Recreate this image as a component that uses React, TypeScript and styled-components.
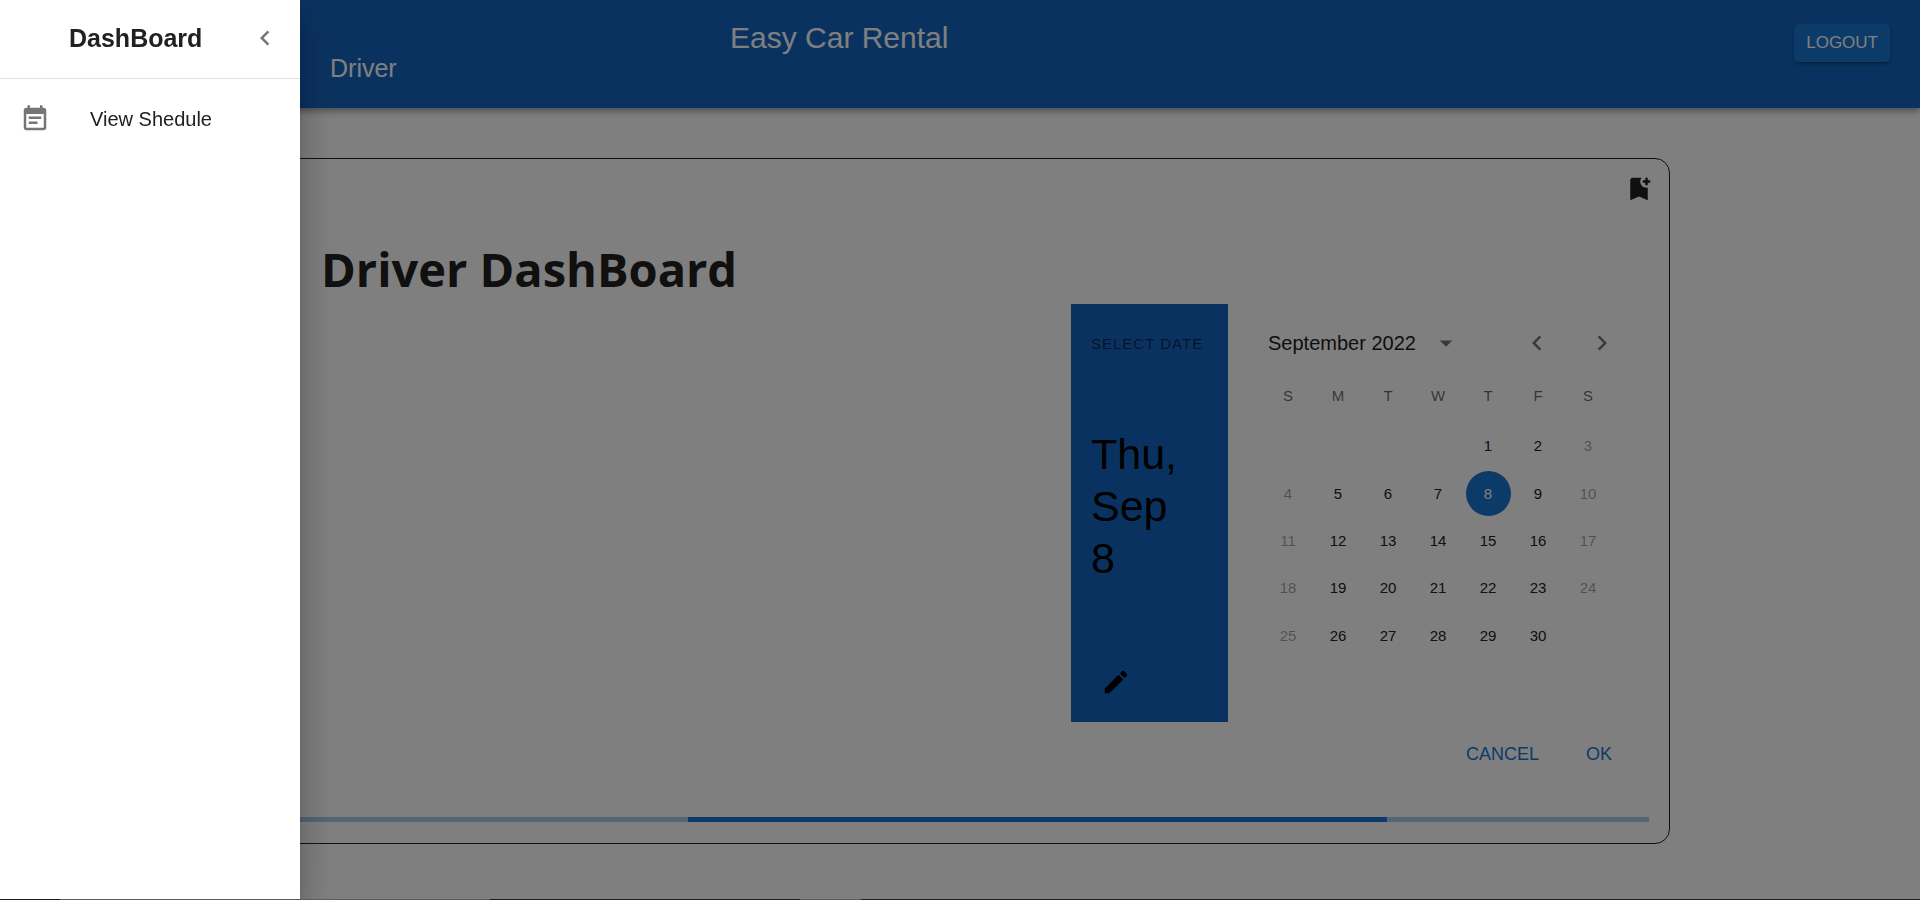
import React, { useState } from "react";
import styled, { createGlobalStyle } from "styled-components";

const GlobalStyle = createGlobalStyle`
  *, *::before, *::after { box-sizing: border-box; }
  body {
    margin: 0;
    background: #fff;
    color: #212121;
    font-family: "Liberation Sans", Arial, sans-serif;
  }
  button { font-family: inherit; cursor: pointer; }
  h1, h2, p { margin: 0; }
`;

const AppBar = styled.header`
  display: flex;
  align-items: flex-start;
  min-height: 108px;
  padding: 20px 30px 24px 330px;
  background: #1565c0;
  color: #fff;
  box-shadow: 0 3px 5px -1px rgba(0, 0, 0, 0.2), 0 5px 6px rgba(0, 0, 0, 0.14),
    0 1px 13px rgba(0, 0, 0, 0.12);
`;

const Role = styled.p`
  flex: 0 0 400px;
  align-self: flex-end;
  font-size: 25px;
  line-height: 32px;
`;

const AppTitle = styled.p`
  flex: 1;
  font-size: 30px;
  line-height: 36px;
`;

const LogoutButton = styled.button`
  height: 38px;
  margin-top: 4px;
  padding: 0 12px;
  border: 0;
  border-radius: 5px;
  background: #1976d2;
  color: #fff;
  font-size: 17px;
  line-height: 28px;
  box-shadow: 0 4px 1px -3px rgba(0, 0, 0, 0.2), 0 3px 3px rgba(0, 0, 0, 0.14),
    0 1px 6px rgba(0, 0, 0, 0.12);
`;

const Main = styled.main`
  padding: 50px 250px 40px;
`;

const Card = styled.section`
  display: flex;
  flex-direction: column;
  padding: 10px 20px 21px;
  border: 1px solid #212121;
  border-radius: 15px;
`;

const CardTools = styled.div`
  display: flex;
  justify-content: flex-end;
  margin-right: -10px;
`;

const IconButton = styled.button<{ $color?: string }>`
  display: flex;
  padding: 5px;
  border: 0;
  border-radius: 50%;
  background: none;
  color: ${(p) => p.$color ?? "#757575"};
`;

const Glyph = styled.svg`
  display: block;
  flex: none;
  width: 30px;
  height: 30px;
  fill: currentColor;
`;

const Heading = styled.h1`
  padding: 25px 50px 0;
  font-family: "Segoe UI", "Open Sans", sans-serif;
  font-size: 47px;
  font-weight: 700;
  line-height: 70px;
`;

const Picker = styled.div`
  display: grid;
  grid-template-columns: 157px 421px;
  justify-content: end;
`;

const PickerToolbar = styled.div`
  display: flex;
  flex-direction: column;
  align-items: flex-start;
  justify-content: space-between;
  height: 418px;
  padding: 20px;
  background: #1565c0;
  color: #000;
`;

const Overline = styled.p`
  color: rgba(0, 0, 0, 0.6);
  font-size: 15px;
  line-height: 40px;
  letter-spacing: 1px;
  text-transform: uppercase;
  white-space: nowrap;
`;

const PickedDate = styled.p`
  width: 90px;
  margin-bottom: 14px;
  font-size: 43px;
  line-height: 52px;
`;

const EditButton = styled(IconButton)`
  margin: 0 0 0 5px;
`;

const Calendar = styled.div`
  width: 400px;
  margin-left: 10px;
`;

const CalendarHeader = styled.div`
  display: flex;
  align-items: center;
  height: 40px;
  margin: 19px 0 6px;
  padding: 0 16px 0 30px;
  font-size: 20px;
  line-height: 30px;
`;

const SwitchView = styled(IconButton)`
  margin-right: auto;
  margin-left: 10px;
`;

const MonthArrows = styled.div`
  display: flex;
  gap: 25px;
`;

const Days = styled.table`
  width: 350px;
  height: 290px;
  margin: 0 auto;
  border-collapse: collapse;
  table-layout: fixed;
  font-size: 15px;
`;

const Weekday = styled.th`
  height: 53px;
  padding: 0;
  color: rgba(0, 0, 0, 0.6);
  font-weight: 400;
`;

const DayCell = styled.td`
  padding: 1px 0;
`;

const Day = styled.button<{ $selected: boolean }>`
  display: block;
  width: 45px;
  height: 45px;
  margin: 0 auto;
  padding: 0;
  border: 0;
  border-radius: 50%;
  background: ${(p) => (p.$selected ? "#1976d2" : "transparent")};
  color: ${(p) => (p.$selected ? "#fff" : "#212121")};
  font-size: 15px;
  &:disabled { color: rgba(0, 0, 0, 0.38); cursor: default; }
`;

const Actions = styled.div`
  display: flex;
  justify-content: flex-end;
  gap: 10px;
  padding: 10px;
`;

const TextButton = styled.button`
  min-width: 80px;
  height: 44px;
  padding: 0 10px;
  border: 0;
  background: none;
  color: #1976d2;
  font-size: 18px;
`;

const Track = styled.div`
  display: flex;
  height: 5px;
  margin-top: 31px;
  background: #a7caed;
`;

const TrackBar = styled.div`
  width: 699px;
  margin-left: 417px;
  background: #1976d2;
`;

const Backdrop = styled.div`
  position: fixed;
  inset: 0;
  background: rgba(0, 0, 0, 0.5);
`;

const Drawer = styled.aside`
  position: fixed;
  inset: 0 auto 0 0;
  width: 300px;
  background: #fff;
  box-shadow: 0 10px 13px -6px rgba(0, 0, 0, 0.2), 0 20px 30px 3px rgba(0, 0, 0, 0.14),
    0 8px 38px 6px rgba(0, 0, 0, 0.12);
`;

const DrawerHeader = styled.div`
  display: flex;
  align-items: center;
  justify-content: space-between;
  height: 79px;
  padding: 0 15px 2px 69px;
  border-bottom: 1px solid #e0e0e0;
`;

const DrawerTitle = styled.h2`
  font-size: 25px;
  line-height: 40px;
`;

const NavLink = styled.a`
  display: flex;
  align-items: center;
  gap: 40px;
  height: 60px;
  margin-top: 10px;
  padding: 0 20px;
  color: #212121;
  font-size: 20px;
  text-decoration: none;
  svg { color: #757575; }
`;

const TaskStrip = styled.div`
  position: fixed;
  inset: auto 0 0 0;
  display: flex;
  height: 1px;
  background: #1f1f1f;
`;

const TaskSegment = styled.div<{ $width: number; $lit?: boolean }>`
  width: ${(p) => p.$width}px;
  background: ${(p) => (p.$lit ? "#5c5c5c" : "#1f1f1f")};
`;

const icons = {
  left: "M15.41 16.59L10.83 12l4.58-4.59L14 6l-6 6 6 6 1.41-1.41z",
  right: "M8.59 16.59L13.17 12 8.59 7.41 10 6l6 6-6 6-1.41-1.41z",
  down: "M7 10l5 5 5-5z",
  edit: "M3 17.25V21h3.75L17.81 9.94l-3.75-3.75L3 17.25zM20.71 7.04c.39-.39.39-1.02 0-1.41l-2.34-2.34a.9959.9959 0 0 0-1.41 0l-1.83 1.83 3.75 3.75 1.83-1.83z",
  bookmark:
    "M21 7h-2v2h-2V7h-2V5h2V3h2v2h2v2zm-2 14-7-3-7 3V5c0-1.1.9-2 2-2h7c-.63.84-1 1.87-1 3 0 2.76 2.24 5 5 5 .34 0 .68-.03 1-.1V21z",
  schedule:
    "M17 10H7v2h10v-2zm2-7h-1V1h-2v2H8V1H6v2H5c-1.11 0-1.99.9-1.99 2L3 19c0 1.1.89 2 2 2h14c1.1 0 2-.9 2-2V5c0-1.1-.9-2-2-2zm0 16H5V8h14v11zm-5-5H7v2h7v-2z",
};

function Icon({ name }: { name: keyof typeof icons }) {
  return (
    <Glyph viewBox="0 0 24 24" aria-hidden="true">
      <path d={icons[name]} />
    </Glyph>
  );
}

const weekdays = ["S", "M", "T", "W", "T", "F", "S"];
const firstWeekday = 4;
const weeks = Array.from({ length: 5 }, (_, w) =>
  weekdays.map((_, d) => {
    const day = w * 7 + d - firstWeekday + 1;
    return day >= 1 && day <= 30 ? day : null;
  })
);

export default function App() {
  const [selected, setSelected] = useState(8);
  return (
    <>
      <GlobalStyle />
      <AppBar>
        <Role>Driver</Role>
        <AppTitle>Easy Car Rental</AppTitle>
        <LogoutButton>LOGOUT</LogoutButton>
      </AppBar>
      <Main>
        <Card>
          <CardTools>
            <IconButton $color="#212121" aria-label="Bookmark">
              <Icon name="bookmark" />
            </IconButton>
          </CardTools>
          <Heading>Driver DashBoard</Heading>
          <Picker>
            <PickerToolbar>
              <Overline>Select date</Overline>
              <PickedDate>Thu, Sep {selected}</PickedDate>
              <EditButton $color="#000" aria-label="Edit date">
                <Icon name="edit" />
              </EditButton>
            </PickerToolbar>
            <Calendar>
              <CalendarHeader>
                September 2022
                <SwitchView aria-label="Switch to year view">
                  <Icon name="down" />
                </SwitchView>
                <MonthArrows>
                  <IconButton aria-label="Previous month">
                    <Icon name="left" />
                  </IconButton>
                  <IconButton aria-label="Next month">
                    <Icon name="right" />
                  </IconButton>
                </MonthArrows>
              </CalendarHeader>
              <Days>
                <thead>
                  <tr>
                    {weekdays.map((label, i) => (
                      <Weekday key={i} scope="col">{label}</Weekday>
                    ))}
                  </tr>
                </thead>
                <tbody>
                  {weeks.map((week, w) => (
                    <tr key={w}>
                      {week.map((day, d) => (
                        <DayCell key={d}>
                          {day && (
                            <Day
                              $selected={day === selected}
                              disabled={d === 0 || d === 6}
                              onClick={() => setSelected(day)}
                            >
                              {day}
                            </Day>
                          )}
                        </DayCell>
                      ))}
                    </tr>
                  ))}
                </tbody>
              </Days>
            </Calendar>
          </Picker>
          <Actions>
            <TextButton>CANCEL</TextButton>
            <TextButton>OK</TextButton>
          </Actions>
          <Track role="progressbar" aria-label="Loading">
            <TrackBar />
          </Track>
        </Card>
      </Main>
      <Backdrop />
      <Drawer>
        <DrawerHeader>
          <DrawerTitle>DashBoard</DrawerTitle>
          <IconButton aria-label="Close menu">
            <Icon name="left" />
          </IconButton>
        </DrawerHeader>
        <nav>
          <NavLink href="#schedule">
            <Icon name="schedule" />
            View Shedule
          </NavLink>
        </nav>
      </Drawer>
      <TaskStrip>
        <TaskSegment $width={60} />
        <TaskSegment $width={430} $lit />
        <TaskSegment $width={310} />
        <TaskSegment $width={61} $lit />
      </TaskStrip>
    </>
  );
}
